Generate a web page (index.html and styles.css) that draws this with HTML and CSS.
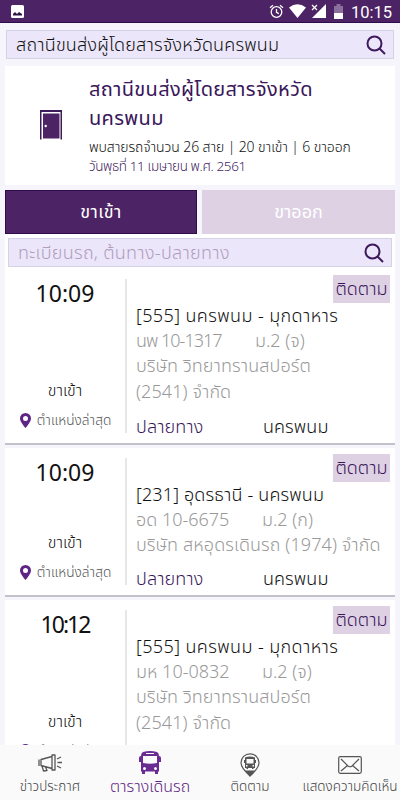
FILE: index.html
```html
<!DOCTYPE html>
<html lang="th">
<head>
  <meta charset="UTF-8" />
  <meta name="viewport" content="width=device-width, initial-scale=1.0"/>
  <title>ตารางเดินรถ</title>
  <link rel="stylesheet" href="styles.css">
</head>
<body>

<div class="statusbar">
  <svg class="picture" width="13" height="13" viewBox="0 0 13 13"><rect width="13" height="13" rx="1.5" fill="#fff"/><path d="M2 10.5V9l2-2 2 2 2-2 3 2v1.5z" fill="#2e1345"/></svg>
  <svg width="15" height="15" viewBox="0 0 15 15" fill="none" stroke="#fff" stroke-width="1.3"><circle cx="7.5" cy="8" r="5.3"/><path d="M7.5 5v3.3l2.3 1.3M1 3.7l3-2.5M14 3.7l-3-2.5"/></svg>
  <svg width="17" height="14" viewBox="0 0 17 14"><path d="M0 3.5Q8.5-3 17 3.5L8.5 14z" fill="#fff"/></svg>
  <svg width="15" height="14" viewBox="0 0 15 14"><path d="M15 0v14H1z" fill="#fff"/><path d="M1 1l5 5M6 1L1 6" stroke="#fff" stroke-width="1.2"/></svg>
  <svg class="battery" width="9" height="15" viewBox="0 0 9 15"><path d="M0 2h2.500V0h4v2H9v7H0z" fill="#8b6f9c"/><path d="M0 9h9v6H0z" fill="#fff"/></svg>
  <span class="clock">10:15</span>
</div>

<main>
  <div class="search station-search">
    <span class="station-query">สถานีขนส่งผู้โดยสารจังหวัดนครพนม</span>
    <svg width="20" height="20" viewBox="0 0 20 20" fill="none" stroke="#3d1a5b" stroke-width="2"><circle cx="8.5" cy="8.5" r="7"/><path d="M13.5 13.5l5.500 5.500"/></svg>
  </div>

  <section class="station">
    <svg class="door" width="22" height="30" viewBox="0 0 22 30"><path d="M0 29.5V0h22v29.500h-1.500V2h-19v27.500z" fill="#3d1a5b"/><path d="M3 3.500h16.500V28.500H3z" fill="#4c2364"/><circle cx="5.700" cy="16" r="1.200" fill="#fff"/></svg>
    <div class="station-info">
      <h1>สถานีขนส่งผู้โดยสารจังหวัด<br>นครพนม</h1>
      <p class="summary">พบสายรถจำนวน 26 สาย | 20 ขาเข้า | 6 ขาออก</p>
      <p class="date">วันพุธที่ 11 เมษายน พ.ศ. 2561</p>
    </div>
  </section>

  <div class="tabs">
    <div class="tab active">ขาเข้า</div>
    <div class="tab">ขาออก</div>
  </div>

  <div class="filter">
    <div class="search">
      <span class="placeholder">ทะเบียนรถ, ต้นทาง-ปลายทาง</span>
      <svg width="20" height="20" viewBox="0 0 20 20" fill="none" stroke="#3d1a5b" stroke-width="2"><circle cx="8.5" cy="8.5" r="7"/><path d="M13.5 13.5l5.500 5.500"/></svg>
    </div>
  </div>

  <article class="card tall">
    <div class="side">
      <div class="time">10:09</div>
      <div class="direction">ขาเข้า</div>
      <div class="locate">
        <svg width="11" height="15" viewBox="0 0 11 15"><path fill-rule="evenodd" d="M5.5 0A5.5 5.5 0 0 0 0 5.5C0 9 5.5 15 5.5 15S11 9 11 5.500A5.500 5.500 0 0 0 5.500 0zm0 3a2.500 2.500 0 1 1 0 5 2.500 2.500 0 0 1 0-5z" fill="#5f2585"/></svg>
        <span>ตำแหน่งล่าสุด</span>
      </div>
    </div>
    <div class="detail">
      <div class="follow">ติดตาม</div>
      <div class="route">[555] นครพนม - มุกดาหาร</div>
      <div class="plate"><span class="number narrow">นพ 10-1317</span><span>ม.2 (จ)</span></div>
      <div class="company">บริษัท วิทยาทรานสปอร์ต<br>(2541) จำกัด</div>
      <div class="dest"><span>ปลายทาง</span><b>นครพนม</b></div>
    </div>
  </article>

  <article class="card">
    <div class="side">
      <div class="time">10:09</div>
      <div class="direction">ขาเข้า</div>
      <div class="locate">
        <svg width="11" height="15" viewBox="0 0 11 15"><path fill-rule="evenodd" d="M5.5 0A5.5 5.5 0 0 0 0 5.5C0 9 5.5 15 5.5 15S11 9 11 5.500A5.500 5.500 0 0 0 5.500 0zm0 3a2.500 2.500 0 1 1 0 5 2.500 2.500 0 0 1 0-5z" fill="#5f2585"/></svg>
        <span>ตำแหน่งล่าสุด</span>
      </div>
    </div>
    <div class="detail">
      <div class="follow">ติดตาม</div>
      <div class="route short">[231] อุดรธานี - นครพนม</div>
      <div class="plate"><span class="number">อด 10-6675</span><span>ม.2 (ก)</span></div>
      <div class="company">บริษัท สหอุดรเดินรถ (1974) จำกัด</div>
      <div class="dest"><span>ปลายทาง</span><b>นครพนม</b></div>
    </div>
  </article>

  <article class="card tall">
    <div class="side">
      <div class="time late">10:12</div>
      <div class="direction">ขาเข้า</div>
      <div class="locate">
        <svg width="11" height="15" viewBox="0 0 11 15"><path fill-rule="evenodd" d="M5.5 0A5.5 5.5 0 0 0 0 5.5C0 9 5.5 15 5.5 15S11 9 11 5.500A5.500 5.500 0 0 0 5.500 0zm0 3a2.500 2.500 0 1 1 0 5 2.500 2.500 0 0 1 0-5z" fill="#5f2585"/></svg>
        <span>ตำแหน่งล่าสุด</span>
      </div>
    </div>
    <div class="detail">
      <div class="follow">ติดตาม</div>
      <div class="route">[555] นครพนม - มุกดาหาร</div>
      <div class="plate"><span class="number">มห 10-0832</span><span>ม.2 (จ)</span></div>
      <div class="company">บริษัท วิทยาทรานสปอร์ต<br>(2541) จำกัด</div>
    </div>
  </article>
</main>

<nav>
  <div class="item">
    <svg width="24" height="20" viewBox="0 0 24 20" fill="none" stroke="#555" stroke-width="1.3" stroke-linejoin="round"><path d="M1 6.500v6.500M3 6.500v6l11 3V3.500zM14 2h3v15h-3zM4 13l1.500 5 3.500-.5-1.500-3.500M19 6l4-2M19.500 9.500H24M19 13l4 2"/></svg>
    <span>ข่าวประกาศ</span>
  </div>
  <div class="item active">
    <svg width="22" height="24" viewBox="0 0 22 24"><path fill-rule="evenodd" d="M4 1Q11-1 18 1q2 .8 2 4 2 0 2 2v4h-2v9.500h-1V23h-3v-2.500H6V23H3v-2.500H2V11H0V7q0-2 2-2 0-3.200 2-4zM7 2v1h8V2zM4 5v7q7 1.500 14 0V5zm1.500 11a1.500 1.500 0 1 0 0 3 1.500 1.500 0 0 0 0-3zm11 0a1.500 1.500 0 1 0 0 3 1.500 1.500 0 0 0 0-3z" fill="#6a2b93"/></svg>
    <span>ตารางเดินรถ</span>
  </div>
  <div class="item">
    <svg width="20" height="24" viewBox="0 0 20 24"><path d="M10 .8a9 9 0 0 0-9 9C1 15 10 23 10 23s9-8 9-13.200a9 9 0 0 0-9-9z" fill="none" stroke="#555" stroke-width="1.2"/><path d="M5 17.500h10l-5 6z" fill="#555"/><path fill-rule="evenodd" d="M5 4.500Q10 2.500 15 4.500V7h1v3h-1v5h-1.500v1H12v-1H8v1H6.500v-1H5v-5H4V7h1zM6.500 6v4.500h7V6zM6 12v1.500h1.500V12zm6.500 0v1.500H14V12z" fill="#555"/></svg>
    <span>ติดตาม</span>
  </div>
  <div class="item feedback">
    <svg width="24" height="18" viewBox="0 0 24 18" fill="none" stroke="#555" stroke-width="1.2"><rect x=".7" y=".7" width="22.600" height="16.600" rx="1.500"/><path d="M3 3l7 7q2 1.500 4 0l7-7M3 15l6.500-5.500M21 15l-6.500-5.500"/></svg>
    <span>แสดงความคิดเห็น</span>
  </div>
</nav>

</body>
</html>
```
FILE: styles.css
```css
* {
  box-sizing: border-box;
}
body {
  margin: 0;
  height: 800px;
  display: flex;
  flex-direction: column;
  overflow: hidden;
  background: #f6f5fc;
  color: #111;
  font-family: 'Noto Sans Thai', Kanit, Lato, sans-serif;
  font-size: 18px;
  font-weight: 300;
  white-space: nowrap;
}
svg {
  flex: none;
  display: block;
}
.statusbar {
  flex: none;
  height: 23px;
  display: flex;
  align-items: center;
  gap: 5px;
  padding: 0 8px 0 11px;
  background: #4c2364;
  border-bottom: 1px solid #2f0c49;
  color: #fff;
}
.picture {
  margin-right: auto;
}
.battery {
  margin-left: 3px;
}
.clock {
  width: 41px;
  margin-left: 3px;
  padding-top: 2px;
  font-family: Roboto, sans-serif;
  font-size: 16.5px;
  font-weight: 400;
}
main {
  flex: 1;
  min-height: 0;
  overflow: hidden;
  padding: 7px 5px 0;
}
.search {
  height: 29px;
  display: flex;
  align-items: center;
  justify-content: space-between;
  padding: 0 7px 0 9px;
  background: #ece6fa;
  border: 1px solid #d6d2e6;
}
.station-search {
  margin: 0 1px;
}
.station-query {
  padding-top: 1px;
  letter-spacing: 0.2px;
}
.station {
  height: 119px;
  margin-top: 7px;
  display: flex;
  background: #fff;
}
.door {
  margin: 44px 27px 0 35px;
}
.station-info {
  padding-top: 10px;
}
h1 {
  margin: 0;
  font-size: 20px;
  font-weight: 400;
  line-height: 29px;
  letter-spacing: 0.35px;
  color: #3a175a;
}
.summary, .date {
  margin: 0;
  font-size: 14px;
  line-height: 19px;
}
.summary {
  margin-top: 4px;
  letter-spacing: -0.1px;
}
.date {
  font-size: 13.5px;
  line-height: 20px;
  letter-spacing: -0.38px;
  color: #44265f;
}
.tabs {
  display: grid;
  grid-template-columns: 192px 193px;
  justify-content: space-between;
  margin-top: 5px;
}
.tab {
  height: 44px;
  line-height: 46px;
  text-align: center;
  font-weight: 400;
  color: #fff;
  background: #ddd1e3;
}
.tab.active {
  background: #4c2364;
  border: 1px solid #2f0c49;
  line-height: 44px;
  letter-spacing: 0.4px;
}
.filter {
  padding: 4px 3px 2px;
  background: #fff;
}
.placeholder {
  padding-top: 1px;
  letter-spacing: 0.3px;
  color: #b09dbe;
}
.card {
  height: 149px;
  margin-bottom: 3px;
  display: flex;
  background: #fff;
  border-bottom: 2px solid #c3c1c9;
}
.card.tall {
  height: 176px;
}
.side {
  width: 122px;
  margin: 10px 0;
  display: flex;
  flex-direction: column;
  align-items: center;
  border-right: 2px solid #e6e6e8;
}
.time {
  font-size: 23px;
  font-weight: 400;
  line-height: 32px;
}
.late {
  letter-spacing: -2px;
}
.direction {
  margin-top: auto;
  font-size: 16px;
  line-height: 22px;
}
.locate {
  height: 28px;
  margin-top: 3px;
  display: flex;
  align-items: center;
  gap: 6px;
  padding: 2px 0 0 1px;
  font-size: 13.7px;
  color: #555;
}
.detail {
  flex: 1;
  display: flex;
  flex-direction: column;
  padding: 6px 5px 3px 9px;
}
.follow {
  align-self: flex-end;
  width: 57px;
  height: 28px;
  line-height: 30px;
  text-align: center;
  color: #3a175a;
  background: #ddd1e3;
}
.route {
  padding-top: 1px;
  line-height: 25px;
  letter-spacing: 0.4px;
}
.route.short {
  letter-spacing: 0.15px;
}
.plate, .company {
  color: #999;
}
.plate {
  display: flex;
  line-height: 25px;
}
.number {
  width: 126px;
}
.narrow {
  width: 119px;
  letter-spacing: -1px;
}
.company {
  line-height: 26px;
  letter-spacing: 0.1px;
}
.dest {
  display: flex;
  margin-top: auto;
  line-height: 24px;
  letter-spacing: 0.1px;
  color: #3a175a;
}
.dest span {
  width: 127px;
}
.dest b {
  font-weight: 300;
  color: #111;
}
nav {
  flex: none;
  height: 55px;
  display: grid;
  grid-template-columns: 25% 25% 25% 25%;
  background: #fafafa;
}
.item {
  display: flex;
  flex-direction: column;
  align-items: center;
  justify-content: space-between;
  padding: 8px 0 5px;
  font-size: 13.5px;
  line-height: 20px;
  color: #444;
}
.item.active {
  padding-top: 6px;
  font-size: 16px;
  color: #5f2585;
}
.item.feedback {
  padding-top: 11px;
}
```
